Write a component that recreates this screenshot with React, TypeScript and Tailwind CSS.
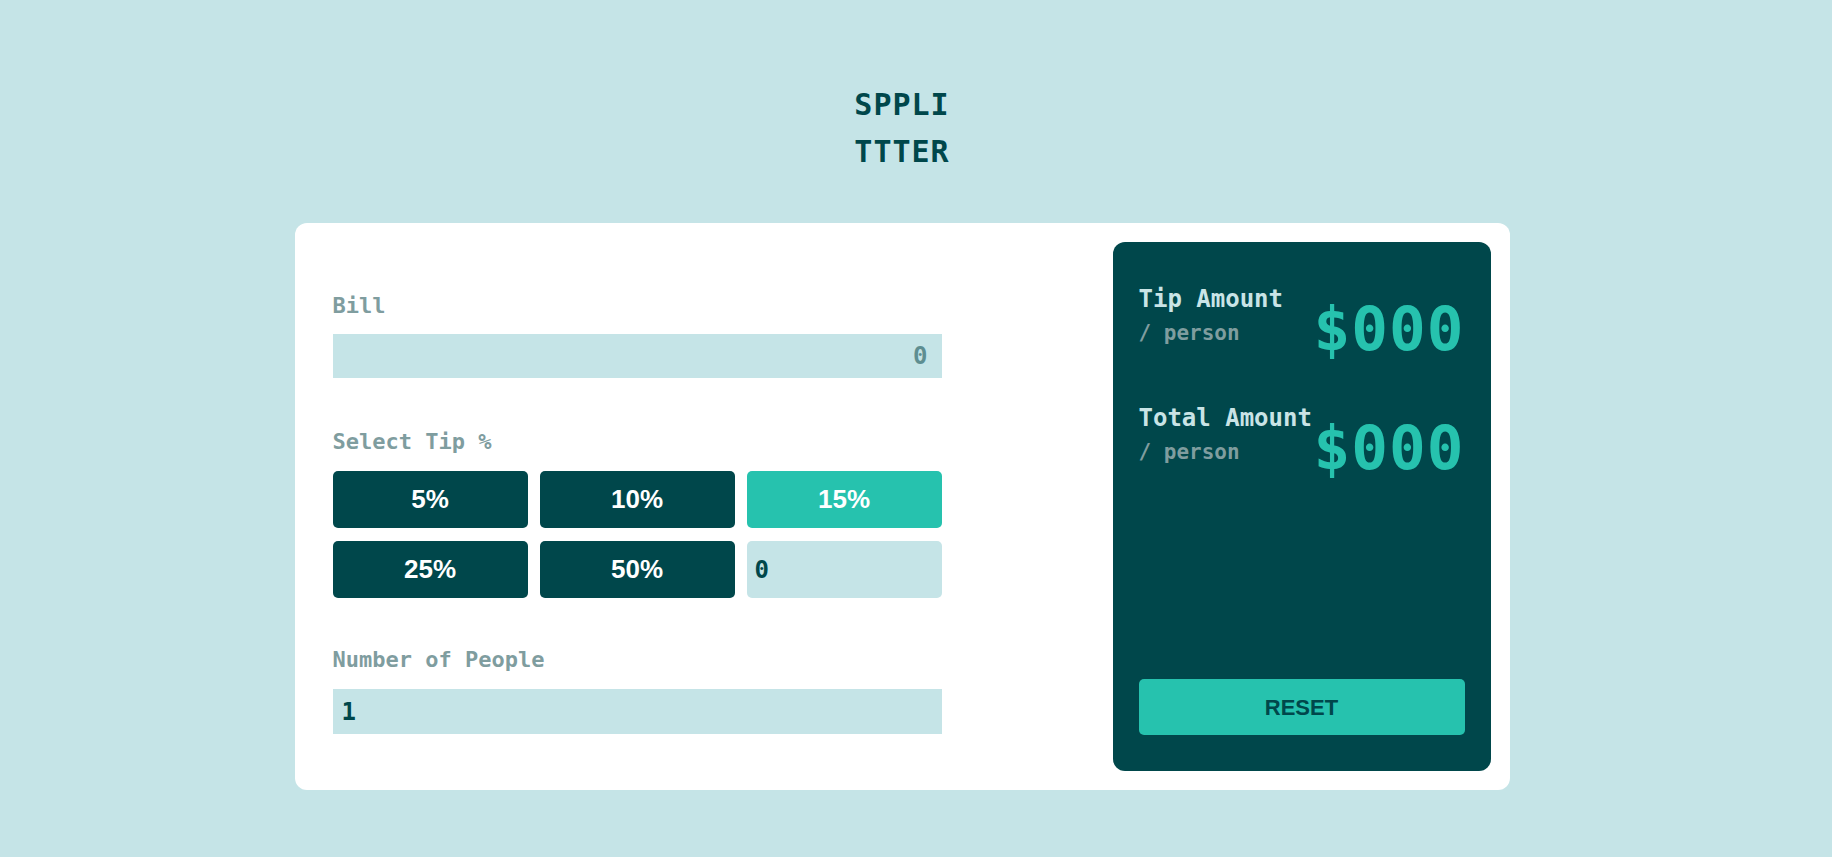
const mono = "font-['DejaVu_Sans_Mono','Liberation_Mono',monospace]";
const sans = "font-['Liberation_Sans',Arial,sans-serif]";

function TipButton({ label, active }: { label: string; active?: boolean }) {
  return (
    <button
      className={`h-[57px] rounded-[5px] ${sans} text-[26px] font-bold text-white ${
        active ? "bg-[#26c2ae]" : "bg-[#00474b]"
      }`}
    >
      {label}
    </button>
  );
}

function ResultRow({ title }: { title: string }) {
  return (
    <div className="flex items-start justify-between">
      <div className="flex flex-col">
        <span className={`${mono} text-[24px] font-bold leading-[30px] text-[#c9e4e6]`}>{title}</span>
        <span className={`${mono} mt-[5px] text-[21px] font-bold leading-[28px] text-[#7f9d9f]`}>/ person</span>
      </div>
      <span className={`${mono} mt-[15px] text-[61px] font-bold leading-[60px] tracking-[1px] text-[#26c2ae]`}>$000</span>
    </div>
  );
}

export default function App() {
  return (
    <div className="min-h-screen bg-[#c5e4e7] pr-[28px] pt-[81px] pb-10">
      <div className="flex flex-col items-center">
        <h1 className={`${mono} text-[30px] font-bold leading-[47px] tracking-[1px] text-[#00474b] text-center`}>
          SPPLI
          <br />
          TTTER
        </h1>

        <div className="mt-[48px] flex w-[1215px] justify-between rounded-[12px] bg-white p-[19px]">
          {/* inputs */}
          <div className="flex w-[628px] flex-col pl-[19px] pt-[50px]">
            <label className={`${mono} text-[22px] font-bold leading-[28px] text-[#7f9d9f]`}>Bill</label>
            <input
              defaultValue="0"
              className={`${mono} mt-[14px] h-[44px] w-full bg-[#c5e4e7] px-[14px] text-right text-[24px] font-bold text-[#5e8e91] outline-none`}
            />

            <label className={`${mono} mt-[50px] text-[22px] font-bold leading-[28px] text-[#7f9d9f]`}>Select Tip %</label>
            <div className="mt-[15px] grid grid-cols-3 gap-x-[12px] gap-y-[13px]">
              <TipButton label="5%" />
              <TipButton label="10%" />
              <TipButton label="15%" active />
              <TipButton label="25%" />
              <TipButton label="50%" />
              <input
                defaultValue="0"
                className={`${mono} h-[57px] w-full rounded-[5px] bg-[#c5e4e7] px-[8px] text-[24px] font-bold text-[#00474b] outline-none`}
              />
            </div>

            <label className={`${mono} mt-[48px] text-[22px] font-bold leading-[28px] text-[#7f9d9f]`}>Number of People</label>
            <input
              defaultValue="1"
              className={`${mono} mt-[15px] h-[45px] w-full bg-[#c5e4e7] px-[9px] text-[24px] font-bold text-[#00474b] outline-none`}
            />
          </div>

          {/* results */}
          <div className="flex h-[529px] w-[378px] flex-col justify-between rounded-[12px] bg-[#00474b] px-[26px] pt-[42px] pb-[36px]">
            <div className="flex flex-col gap-[44px]">
              <ResultRow title="Tip Amount" />
              <ResultRow title="Total Amount" />
            </div>
            <button className={`${sans} h-[56px] w-full rounded-[5px] bg-[#26c2ae] text-[22px] font-bold text-[#00474b]`}>
              RESET
            </button>
          </div>
        </div>
      </div>
    </div>
  );
}
